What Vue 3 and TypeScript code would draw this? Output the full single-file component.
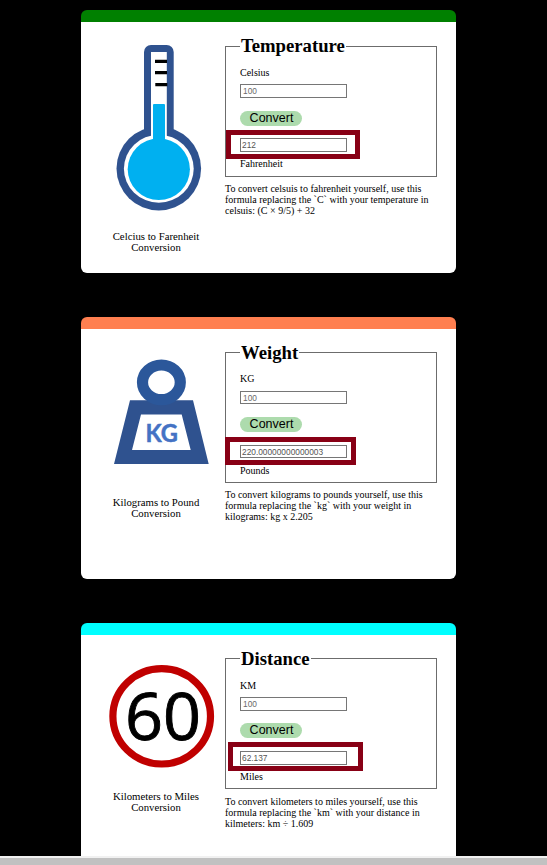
<script setup lang="ts">
import { reactive } from 'vue'

interface Converter {
  id: 'temperature' | 'weight' | 'distance'
  title: string
  caption: string[]
  from: string
  to: string
  input: string
  output: string
  help: string[]
  convert: (value: number) => number
}

const converters = reactive<Converter[]>([
  {
    id: 'temperature',
    title: 'Temperature',
    caption: ['Celcius to Farenheit', 'Conversion'],
    from: 'Celsius',
    to: 'Fahrenheit',
    input: '100',
    output: '212',
    help: [
      'To convert celsuis to fahrenheit yourself, use this',
      'formula replacing the `C` with your temperature in',
      'celsuis: (C × 9/5) + 32',
    ],
    convert: (v) => (v * 9) / 5 + 32,
  },
  {
    id: 'weight',
    title: 'Weight',
    caption: ['Kilograms to Pound', 'Conversion'],
    from: 'KG',
    to: 'Pounds',
    input: '100',
    output: '220.00000000000003',
    help: [
      'To convert kilograms to pounds yourself, use this',
      'formula replacing the `kg` with your weight in',
      'kilograms: kg x 2.205',
    ],
    convert: (v) => v * 2.2,
  },
  {
    id: 'distance',
    title: 'Distance',
    caption: ['Kilometers to Miles', 'Conversion'],
    from: 'KM',
    to: 'Miles',
    input: '100',
    output: '62.137',
    help: [
      'To convert kilometers to miles yourself, use this',
      'formula replacing the `km` with your distance in',
      'kilmeters: km ÷ 1.609',
    ],
    convert: (v) => v * 0.62137,
  },
])

function run(c: Converter) {
  c.output = String(c.convert(Number(c.input)))
}
</script>

<template>
  <div class="page">
    <main class="cards">
      <section v-for="c in converters" :key="c.id" class="card" :class="c.id">
        <div class="side">
          <svg v-if="c.id === 'temperature'" class="picture" viewBox="81 22 144 209">
            <rect x="144" y="45" width="29.7" height="110" rx="7" fill="#2f528f" />
            <ellipse cx="158.8" cy="168.5" rx="42.3" ry="41.9" fill="#2f528f" />
            <ellipse cx="158.8" cy="168.7" rx="34.9" ry="34" fill="#fff" />
            <rect x="151" y="52" width="15.8" height="98" fill="#fff" />
            <ellipse cx="158.8" cy="169.2" rx="31.1" ry="30.8" fill="#00b0f0" />
            <rect x="153" y="104" width="12" height="50" rx="1" fill="#00b0f0" />
            <path d="M155 61.4h12M155 72.6h12M155.3 84.6h12" stroke="#000" stroke-width="3.4" />
          </svg>
          <svg v-else-if="c.id === 'weight'" class="picture" viewBox="81 329 144 168">
            <path d="M130 400.3h63l15.7 63.7H114zM141 414.5l-9 35.5h58.7l-9-35.5z" fill="#2f528f" fill-rule="evenodd" />
            <ellipse cx="161.4" cy="382.3" rx="18.9" ry="17.3" fill="none" stroke="#2b579a" stroke-width="11.2" />
            <text class="kg" x="145.4" y="441.7" textLength="32.4" lengthAdjust="spacingAndGlyphs">KG</text>
          </svg>
          <svg v-else class="picture" viewBox="81 635 144 156">
            <ellipse cx="161.7" cy="716.3" rx="48.8" ry="47.7" fill="#fff" stroke="#c00000" stroke-width="7.2" />
            <text class="limit" x="125" y="739.8" textLength="76" lengthAdjust="spacingAndGlyphs">60</text>
          </svg>
          <p class="caption">
            <span v-for="line in c.caption" :key="line">{{ line }}</span>
          </p>
        </div>
        <div class="main">
          <form class="form" @submit.prevent="run(c)">
            <h2 class="title">{{ c.title }}</h2>
            <label class="from">{{ c.from }}</label>
            <input v-model="c.input" class="field source" />
            <button class="convert">Convert</button>
            <div class="result">
              <input class="field" :value="c.output" readonly />
              <span class="highlight"></span>
            </div>
            <label class="to">{{ c.to }}</label>
          </form>
          <p class="help">
            <span v-for="line in c.help" :key="line">{{ line }}</span>
          </p>
        </div>
      </section>
    </main>
    <div class="scrollbar"></div>
  </div>
</template>

<style>
body {
  background: #000;
  overflow: hidden;
}
</style>

<style scoped>
.page {
  display: flex;
  flex-direction: column;
  height: 865px;
  overflow: hidden;
  background: #000;
  color: #000;
  font-family: 'Liberation Serif', serif;
}
.cards {
  flex: 1;
  min-height: 0;
  overflow: hidden;
  padding: 10px 0 0 81px;
}
.card {
  box-sizing: border-box;
  display: grid;
  grid-template-columns: 144px 212px;
  width: 375px;
  height: 262px;
  margin-bottom: 44px;
  border-top: 12px solid #008000;
  border-radius: 6px;
  background: #fff;
}
.temperature {
  height: 263px;
}
.weight {
  border-top-color: #ff7f50;
}
.distance {
  border-top-color: #00ffff;
}
.picture {
  display: block;
  width: 144px;
  height: 209px;
}
.weight .picture {
  height: 168px;
}
.distance .picture {
  height: 156px;
}
.kg {
  font: bold 24.8px Lato, sans-serif;
  fill: #4472c4;
  stroke: #4472c4;
  stroke-width: 0.5px;
}
.limit {
  font: 66px 'Open Sans', sans-serif;
  fill: #000;
  stroke: #000;
  stroke-width: 0.9px;
}
.caption {
  margin: 0;
  padding-left: 6px;
  font-size: 10.75px;
  line-height: 11px;
  text-align: center;
}
.caption span,
.help span {
  display: block;
  white-space: nowrap;
}
.main {
  padding-top: 24px;
}
.weight .main,
.distance .main {
  padding-top: 23px;
}
.form {
  box-sizing: border-box;
  display: flex;
  flex-direction: column;
  align-items: flex-start;
  height: 131px;
  padding-left: 14px;
  border: 1px solid #6c6c6c;
}
.title {
  margin: -12px 0 0;
  padding: 0 1px;
  background: #fff;
  font-size: 18.7px;
  line-height: 22px;
  height: 22px;
}
.weight .title,
.distance .title {
  margin: -11px 0 -1px;
}
.from,
.to {
  font-size: 10px;
  line-height: 12px;
}
.from {
  margin-top: 10px;
}
.distance .from {
  margin: 11px 0 -1px;
}
.field {
  box-sizing: border-box;
  display: block;
  width: 107px;
  height: 14px;
  margin: 0;
  padding: 0 2px;
  border: 1px solid #767676;
  border-radius: 0;
  outline: none;
  background: #fff;
  color: #6a6a6a;
  font: 8.33px 'Liberation Sans', sans-serif;
}
.result .field {
  padding-left: 1px;
  color: #545454;
}
.source {
  margin: 5px 0 13px;
}
.weight .source,
.distance .source {
  margin: 6px 0 12px;
}
.weight .source {
  height: 13px;
  margin-bottom: 13px;
}
.convert {
  width: 62px;
  height: 15px;
  margin: 0;
  padding: 0 0 0 1px;
  border: 0;
  border-radius: 8px;
  background: #addbad;
  color: #000;
  font: 12.5px/13px 'Liberation Sans', sans-serif;
}
.result {
  position: relative;
  margin-top: 12px;
}
.weight .result,
.distance .result {
  margin-top: 13px;
}
.weight .result .field {
  height: 13px;
}
.highlight {
  position: absolute;
  box-sizing: border-box;
  left: -14px;
  top: -8px;
  width: 134px;
  height: 29px;
  border: 5px solid #880015;
}
.weight .highlight {
  left: -15px;
  width: 131px;
  height: 28px;
}
.distance .highlight {
  left: -12px;
  top: -9px;
  width: 135px;
}
.to {
  margin-top: 6px;
}
.weight .to {
  margin-top: 7px;
}
.help {
  margin: 6px 0 0;
  font-size: 10px;
  line-height: 11px;
}
.distance .help {
  margin-top: 7px;
}
.scrollbar {
  box-sizing: border-box;
  height: 9px;
  border-top: 2px solid #f1f1f1;
  background: #c1c1c1;
}
</style>
